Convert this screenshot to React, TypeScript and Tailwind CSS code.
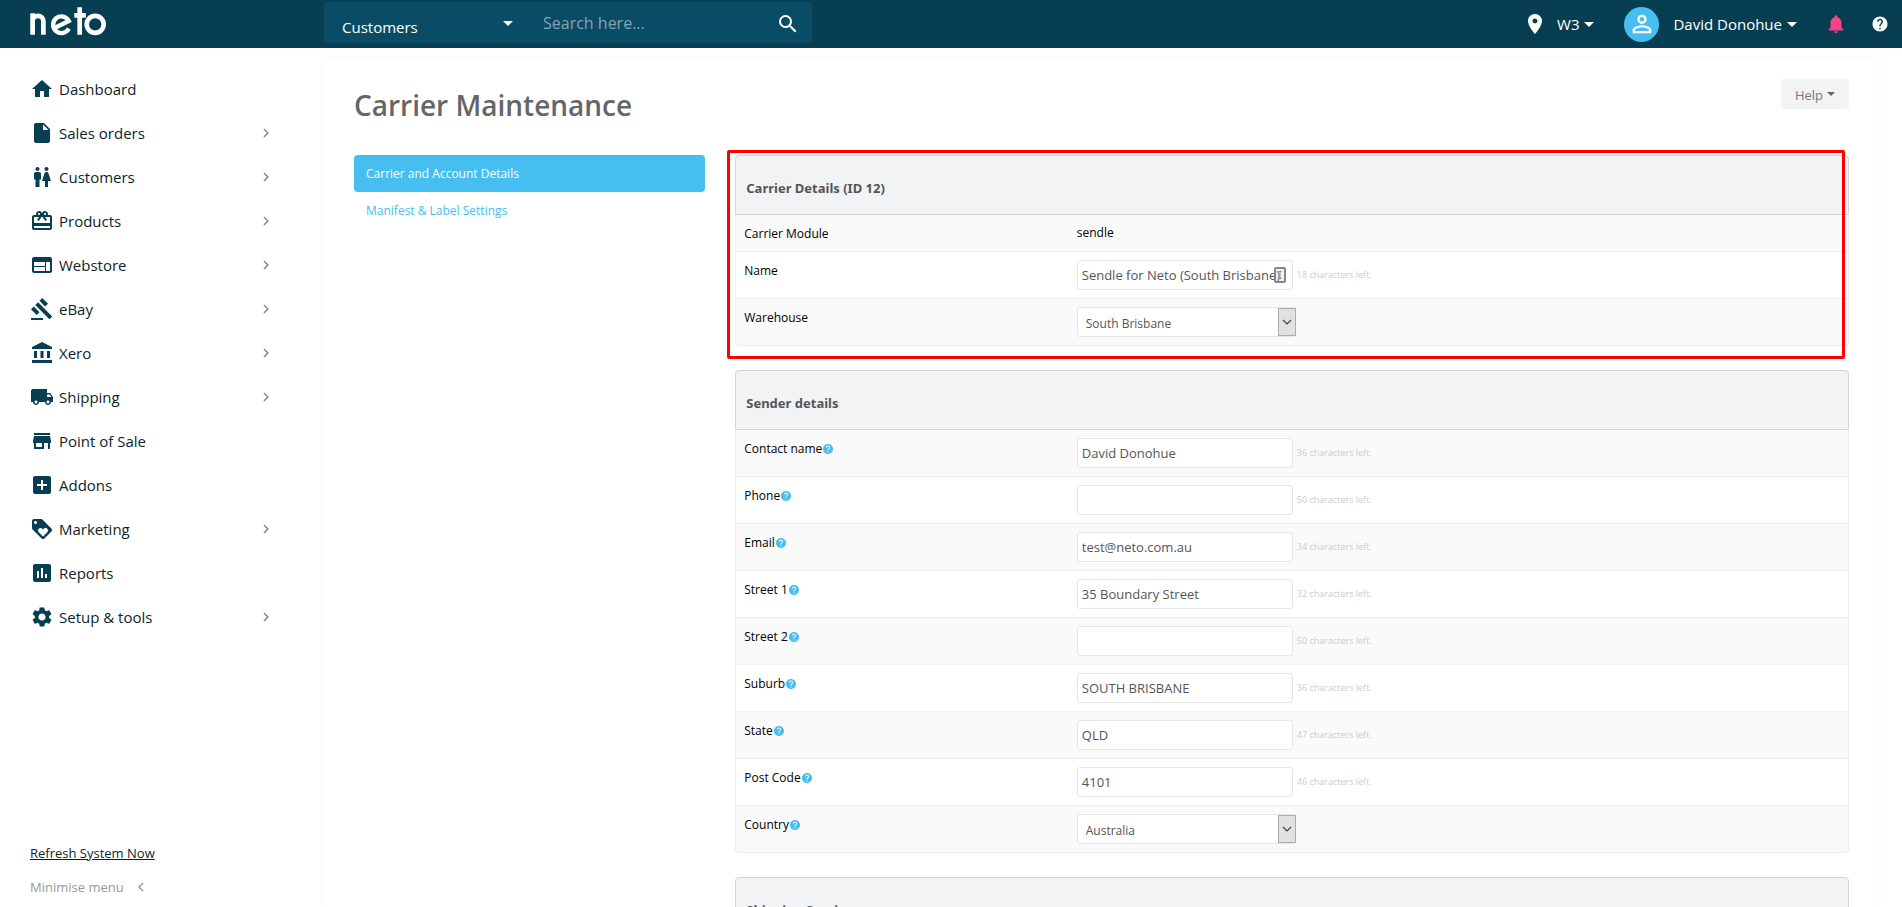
import type { ComponentType, ReactNode } from "react";
import {
  MdAccountBalance,
  MdAddBox,
  MdAssessment,
  MdCardGiftcard,
  MdChevronLeft,
  MdChevronRight,
  MdGavel,
  MdHelp,
  MdHome,
  MdInsertDriveFile,
  MdLocalShipping,
  MdLoyalty,
  MdNotifications,
  MdOutlinePersonOutline,
  MdPlace,
  MdSearch,
  MdSettings,
  MdStore,
  MdWc,
  MdWeb,
} from "react-icons/md";

type Icon = ComponentType<{ className?: string }>;

const MENU: { label: string; icon: Icon; sub?: boolean }[] = [
  { label: "Dashboard", icon: MdHome },
  { label: "Sales orders", icon: MdInsertDriveFile, sub: true },
  { label: "Customers", icon: MdWc, sub: true },
  { label: "Products", icon: MdCardGiftcard, sub: true },
  { label: "Webstore", icon: MdWeb, sub: true },
  { label: "eBay", icon: MdGavel, sub: true },
  { label: "Xero", icon: MdAccountBalance, sub: true },
  { label: "Shipping", icon: MdLocalShipping, sub: true },
  { label: "Point of Sale", icon: MdStore },
  { label: "Addons", icon: MdAddBox },
  { label: "Marketing", icon: MdLoyalty, sub: true },
  { label: "Reports", icon: MdAssessment },
  { label: "Setup & tools", icon: MdSettings, sub: true },
];

const SENDER_FIELDS = [
  { id: "contact", label: "Contact name", value: "David Donohue", left: 36 },
  { id: "phone", label: "Phone", value: "", left: 50 },
  { id: "email", label: "Email", value: "test@neto.com.au", left: 34 },
  { id: "street1", label: "Street 1", value: "35 Boundary Street", left: 32 },
  { id: "street2", label: "Street 2", value: "", left: 50 },
  { id: "suburb", label: "Suburb", value: "SOUTH BRISBANE", left: 36 },
  { id: "state", label: "State", value: "QLD", left: 47 },
  { id: "postcode", label: "Post Code", value: "4101", left: 46 },
];

function Caret({ className = "" }: { className?: string }) {
  return (
    <svg viewBox="0 0 10 5" className={className} fill="currentColor">
      <path d="M0 0h10L5 5z" />
    </svg>
  );
}

function Logo() {
  return (
    <svg viewBox="0 0 78 30" className="h-[30px] w-[78px]" fill="none" stroke="#fff" strokeWidth="4.7" role="img" aria-label="neto">
      <path d="M3.6 28.7V7.3M3.6 28.7V15.300a5.400 5.400 0 0 1 10.800 0v13.400" />
      <path d="M26 21.800 39.800 15A8.300 8.300 0 1 0 39.800 22.500" strokeWidth="4.300" />
      <path d="M50.700 1.300v27.400M45.300 9.400h11.500" />
      <circle cx="66.200" cy="18.300" r="8.500" />
    </svg>
  );
}

// ─── Form pieces ─────────────────────────────────────────────────

function Panel({ title, children }: { title: string; children?: ReactNode }) {
  return (
    <section className="mb-6">
      <h2 className="rounded-t border border-[#d3d4d5] bg-[#f1f3f5] px-[10px] pt-[23px] pb-4 font-['Noto_Sans',sans-serif] text-[13px] leading-[19px] font-bold text-[#555]">
        {title}
      </h2>
      <div className="overflow-hidden rounded-b border-x border-[#eee]">{children}</div>
    </section>
  );
}

function Row({ label, htmlFor, help, children }: { label: string; htmlFor?: string; help?: boolean; children: ReactNode }) {
  return (
    <div className="flex border-b border-[#eee] odd:bg-[#fafafa] last:rounded-b">
      <div className="flex w-3/10 items-start pt-[9px] pb-[7px] pl-2 leading-5 text-black">
        <label htmlFor={htmlFor}>{label}</label>
        {help && <MdHelp className="mt-1 size-3 text-[#46beef]" />}
      </div>
      <div className="flex items-center px-[7px] py-2">{children}</div>
    </div>
  );
}

function TextField({ id, value, left, autofill }: { id: string; value: string; left: number; autofill?: boolean }) {
  return (
    <>
      <div className="relative">
        <input
          id={id}
          defaultValue={value}
          className="block h-[30px] w-[216px] rounded-[3px] border border-[#e5e5e5] bg-white px-1 text-[13px] text-[#555]"
        />
        {autofill && (
          <svg viewBox="0 0 12 16" className="absolute top-[7px] right-[7px] h-4 w-3" fill="none">
            <rect x="1" y="1" width="10" height="14" rx="1" fill="#ccc" fillOpacity=".3" stroke="#888" strokeWidth="2" />
            <path d="M4.500 4.500h3M6 4.500v7M4.500 11.500h3" stroke="#7a8a99" />
          </svg>
        )}
      </div>
      <span className="ml-1 text-[9px] text-[#ccc]">{left} characters left.</span>
    </>
  );
}

function SelectField({ id, value }: { id: string; value: string }) {
  return (
    <div className="relative">
      <select
        id={id}
        className="block h-[30px] w-[219px] appearance-none rounded-[3px] border border-[#e5e5e5] bg-white px-2 pt-[3px] text-[12px] text-[#555]"
      >
        <option>{value}</option>
      </select>
      <span className="pointer-events-none absolute inset-y-px right-0 flex w-[18px] items-center justify-center border border-[#adadad] bg-[#e1e1e1]">
        <svg viewBox="0 0 10 6" className="h-[6px] w-[10px]" fill="none" stroke="#444" strokeWidth="1.200">
          <path d="M1 1l4 4 4-4" />
        </svg>
      </span>
    </div>
  );
}

// ─── Layout ──────────────────────────────────────────────────────

function TopBar() {
  return (
    <header className="flex h-12 items-center bg-[#083e52] text-[15px] text-white">
      <a href="#" className="mb-[6px] ml-[29px] w-[295px]">
        <Logo />
      </a>
      <div className="mb-[3px] flex h-[41px] w-[488px] items-center rounded bg-[#0a4c66]">
        <div className="relative w-[199px]">
          <select aria-label="Search in" className="w-full appearance-none bg-transparent pt-[10px] pl-[18px] text-[15px]">
            <option>Customers</option>
          </select>
          <Caret className="pointer-events-none absolute top-[15px] right-[10px] h-[5px] w-[10px]" />
        </div>
        <input
          aria-label="Search"
          placeholder="Search here..."
          className="ml-5 min-w-0 flex-1 bg-transparent text-[16px] placeholder:text-[#84a5b2]"
        />
        <button aria-label="Go" className="mt-[2px] mr-3">
          <MdSearch className="size-6" />
        </button>
      </div>
      <div className="ml-auto flex items-center">
        <MdPlace className="size-6" />
        <button className="ml-[10px] flex items-center gap-[5px]">
          W3
          <Caret className="h-[5px] w-[10px]" />
        </button>
        <span className="ml-[30px] flex size-[35px] items-center justify-center rounded-full bg-[#46beef]">
          <MdOutlinePersonOutline className="size-7" />
        </span>
        <button className="ml-[14px] flex items-center gap-[5px]">
          David Donohue
          <Caret className="h-[5px] w-[10px]" />
        </button>
        <button aria-label="Notifications" className="ml-7 text-[#ff4081]">
          <MdNotifications className="size-[22px]" />
        </button>
        <button aria-label="Help" className="mr-[13px] ml-6">
          <MdHelp className="size-[18px]" />
        </button>
      </div>
    </header>
  );
}

function Sidebar() {
  return (
    <aside className="flex w-[323px] shrink-0 flex-col pt-[19px] text-[#0d1f28]">
      <nav>
        {MENU.map(({ label, icon: IconCmp, sub }) => (
          <a key={label} href="#" className="flex h-11 items-center pl-[30px] text-[15px]">
            <IconCmp className="size-6 text-[#083e52]" />
            <span className="ml-[5px] w-[198px]">{label}</span>
            {sub && <MdChevronRight className="size-[18px] text-[#888]" />}
          </a>
        ))}
      </nav>
      <div className="mt-auto pb-[10px] pl-[30px] text-[13px] leading-5">
        <a href="#" className="underline">
          Refresh System Now
        </a>
        <button className="mt-[14px] flex items-center gap-2 text-[#999]">
          Minimise menu
          <MdChevronLeft className="size-[18px]" />
        </button>
      </div>
    </aside>
  );
}

export default function App() {
  return (
    <div className="flex h-screen flex-col overflow-hidden bg-white font-['Open_Sans',sans-serif] text-[12px]">
      <TopBar />
      <div className="flex min-h-0 flex-1">
        <Sidebar />
        <main className="mt-[10px] mr-[23px] flex-1 rounded-t pt-[21px] pr-[30px] pl-[31px] shadow-[0_0_4px_rgba(0,0,0,0.04)]">
          <div className="flex h-[76px] justify-between">
            <h1 className="mt-2 text-[28px] leading-9 font-semibold text-[#666]">Carrier Maintenance</h1>
            <button className="flex h-[30px] items-center gap-1 rounded bg-[#f1f3f5] px-[14px] pt-[3px] text-[13px] text-[#777]">
              Help
              <Caret className="mb-1 h-1 w-2 text-[#666]" />
            </button>
          </div>
          <div className="-mx-[15px] flex">
            <nav className="w-1/4 px-[15px] leading-[17px]">
              <a href="#" className="block rounded bg-[#46beef] px-3 py-[10px] text-white">
                Carrier and Account Details
              </a>
              <a href="#" className="block px-3 py-[10px] text-[#46beef]">
                Manifest &amp; Label Settings
              </a>
            </nav>
            <div className="relative w-3/4 px-[15px]">
              <Panel title="Carrier Details (ID 12)">
                <Row label="Carrier Module">
                  <span className="leading-5">sendle</span>
                </Row>
                <Row label="Name" htmlFor="name">
                  <TextField id="name" value="Sendle for Neto (South Brisbane)" left={18} autofill />
                </Row>
                <Row label="Warehouse" htmlFor="warehouse">
                  <SelectField id="warehouse" value="South Brisbane" />
                </Row>
              </Panel>
              <Panel title="Sender details">
                {SENDER_FIELDS.map((f) => (
                  <Row key={f.id} label={f.label} htmlFor={f.id} help>
                    <TextField id={f.id} value={f.value} left={f.left} />
                  </Row>
                ))}
                <Row label="Country" htmlFor="country" help>
                  <SelectField id="country" value="Australia" />
                </Row>
              </Panel>
              <Panel title="Shipping Services" />
              {/* highlight frame round the carrier details */}
              <div className="pointer-events-none absolute -top-[5px] right-[19px] left-[7px] h-[209px] rounded-[2px] border-3 border-[#ff0000]" />
            </div>
          </div>
        </main>
      </div>
    </div>
  );
}
